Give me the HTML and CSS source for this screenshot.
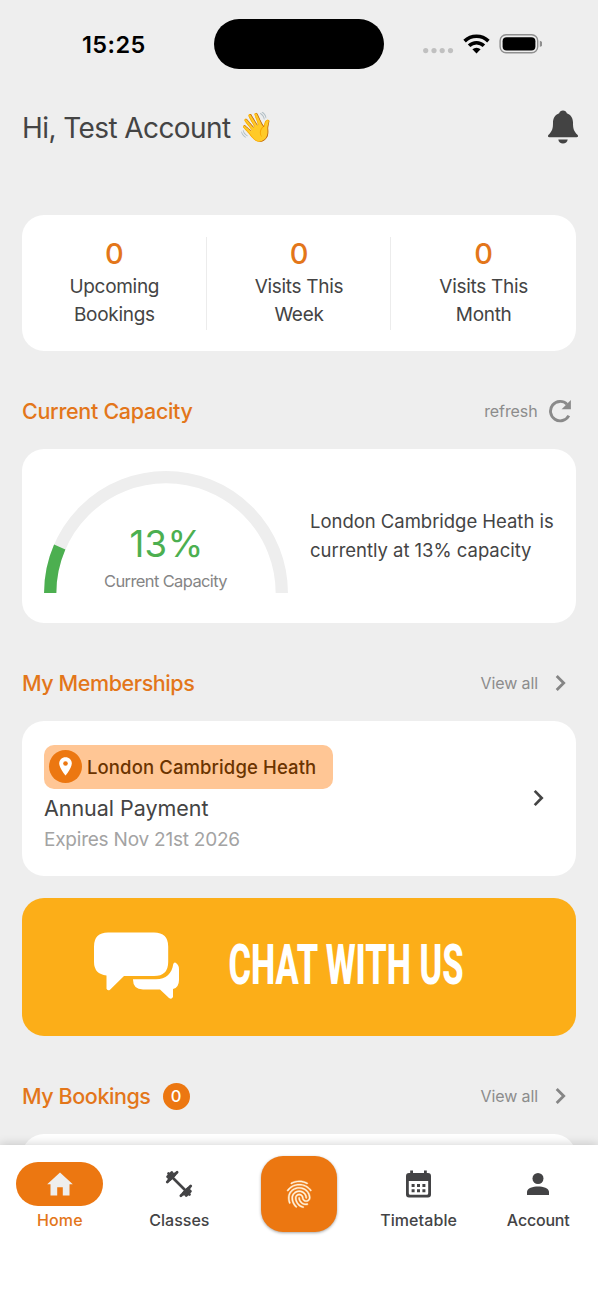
FILE: index.html
```html
<!DOCTYPE html>
<html lang="en">
<head>
<meta charset="utf-8">
<title>Home</title>
<link rel="stylesheet" href="styles.css">
</head>
<body>
<div class="app">
  <main class="screen">
    <div class="status">
      <div class="status-time">15:25</div>
      <div class="island"></div>
      <svg class="status-icons" viewBox="0 0 120 22" width="120" height="22">
        <g fill="#c0c0c0"><circle cx="3.7" cy="17.6" r="2.6"/><circle cx="12" cy="17.6" r="2.6"/><circle cx="20.2" cy="17.6" r="2.6"/><circle cx="28.5" cy="17.6" r="2.6"/></g>
        <g fill="none" stroke="#000" stroke-width="3.6">
          <path d="M42.6 8.1a17.2 17.2 0 0 1 23.8 0"/>
          <path d="M47.1 12.8a10.6 10.6 0 0 1 14.800 0"/>
        </g>
        <path d="M50.4 16.3a6 6 0 0 1 8.2 0l-4.1 4.2z"/>
        <rect x="78.1" y="1.8" width="37.6" height="18" rx="6" fill="none" stroke="#8f8f8f" stroke-width="1.4"/>
        <rect x="80.6" y="4.2" width="32.8" height="13.2" rx="4"/>
        <path d="M117.8 7.800q3 .8 3 3t-3 3z" fill="#8f8f8f"/>
      </svg>
    </div>

    <header class="greeting">
      <h1>Hi, Test Account</h1><span class="wave">👋</span>
      <svg class="bell" viewBox="0 0 30 34" width="30" height="34" fill="#434343">
        <path d="M15 .4c2.1 0 3.2 1 3.8 2.8 4.3 1.5 6.2 5.2 6.2 9.6 0 5.5.6 8.3 4.4 12 1.2 1.3.6 2.4-.9 2.4H1.5C0 27.200-.6 26.100.6 24.800 4.400 21.100 5 18.300 5 12.800 5 8.400 6.900 4.700 11.200 3.200 11.800 1.400 12.900.4 15 .4zM10.300 29.500h9.400c-.3 2.500-2.300 4.100-4.700 4.100s-4.400-1.600-4.700-4.100z"/>
      </svg>
    </header>

    <section class="card stats">
      <div class="stat"><b>0</b><span>Upcoming<br>Bookings</span></div>
      <div class="stat"><b>0</b><span>Visits This<br>Week</span></div>
      <div class="stat"><b>0</b><span>Visits This<br>Month</span></div>
    </section>

    <div class="section-head">
      <h2 class="h-capacity">Current Capacity</h2>
      <span class="link">refresh</span>
      <svg class="refresh" viewBox="0 0 24 24" width="24" height="24">
        <path d="M20.800 16.600A9.700 9.700 0 1 1 19 5.200" fill="none" stroke="#8a8a8a" stroke-width="2.900"/>
        <path d="M22.900 1v9.300h-9.300z" fill="#8a8a8a"/>
      </svg>
    </div>
    <section class="card capacity">
      <div class="gauge">
        <svg viewBox="0 0 244 122" width="244" height="122" fill="none" stroke-width="12.300">
          <path d="M6.200 122a115.800 115.800 0 0 1 231.600 0" stroke="#eee"/>
          <path d="M6.200 122a115.800 115.800 0 0 1 9.520-46" stroke="#4caf50"/>
        </svg>
        <div class="gauge-text"><strong>13%</strong><small>Current Capacity</small></div>
      </div>
      <p>London Cambridge Heath is<br>currently at 13% capacity</p>
    </section>

    <div class="section-head">
      <h2 class="h-members">My Memberships</h2>
      <span class="link">View all</span>
      <svg class="chev" viewBox="0 0 11 18" width="11" height="18"><path d="M1.700 1.900 8.700 9l-7 7.100" fill="none" stroke="#858585" stroke-width="2.800"/></svg>
    </div>
    <section class="card member">
      <div class="member-info">
        <div class="chip">
          <span class="pin"><svg viewBox="0 0 13 19" width="13" height="19"><path d="M6.500.3C2.900.3.200 3 .200 6.500c0 4.700 6.300 12 6.300 12s6.300-7.300 6.300-12C12.800 3 10.100.3 6.500.3z" fill="#fff"/><circle cx="6.500" cy="6.500" r="2.300" fill="#ec7711"/></svg></span>
          <span class="chip-text">London Cambridge Heath</span>
        </div>
        <div class="plan">Annual Payment</div>
        <div class="expires">Expires Nov 21st 2026</div>
      </div>
      <svg class="chev-dark" viewBox="0 0 11 18" width="11" height="18"><path d="M1.700 1.900 8.700 9l-7 7.100" fill="none" stroke="#444" stroke-width="2.700"/></svg>
    </section>

    <section class="banner">
      <svg viewBox="0 0 554 138" width="554" height="138" fill="#fff">
        <path d="M86 34.500h46q14.200 0 14.200 14v15.500q0 14-14.200 14H102L88 91.700q-2 1.500-3.500-1V77.500Q72 76 72 64V48.500q0-14 14-14z"/>
        <path d="M111 81.300h23c10 0 16-6 17.200-15q.600-2.300 2.500-1.500 3.300 2.200 3.300 6.200v11q0 7.500-6 9v8q-1.500 3-4 1l-9-8.600h-17q-10 0-10-9.600z"/>
        <text class="banner-text" transform="translate(206.500 86.300) scale(.6 1)" textLength="391.700" lengthAdjust="spacingAndGlyphs">CHAT WITH US</text>
      </svg>
    </section>

    <div class="section-head">
      <h2 class="h-bookings">My Bookings</h2><span class="badge">0</span>
      <span class="link">View all</span>
      <svg class="chev" viewBox="0 0 11 18" width="11" height="18"><path d="M1.700 1.900 8.700 9l-7 7.100" fill="none" stroke="#858585" stroke-width="2.800"/></svg>
    </div>
    <section class="card next"></section>
  </main>

  <nav class="tabs">
    <a class="tab active">
      <span class="tab-icon"><svg viewBox="0 0 26 24" width="26" height="24" fill="#eee"><path d="M13 .500 25.800 12.300h-3.300V23.500H15.800V15.200h-5.600v8.300H3.500V12.300H.200z"/></svg></span>
      <span class="t-home">Home</span>
    </a>
    <a class="tab">
      <span class="tab-icon"><svg viewBox="0 0 28 28" width="28" height="28" fill="none" stroke="#434345" stroke-linecap="round">
        <path d="M7 7l14 14" stroke-width="2.700"/>
        <path d="M2.300 12.100 12.100 2.300M15.900 25.700 25.700 15.900" stroke-width="2.800"/>
        <path d="M2.600 6.800 6.800 2.600M21.200 25.400l4.200-4.200" stroke-width="2.800"/>
        <path d="M3.500 3.500 7 7M21 21l3.500 3.500" stroke-width="2.700"/>
        <path d="M4.500 9 9 4.500M19 23.500l4.500-4.500" stroke-width="4"/>
      </svg></span>
      <span class="t-classes">Classes</span>
    </a>
    <a class="tab scan">
      <span class="scan-btn"><svg viewBox="0 0 24 24" width="32.500" height="32.500" fill="#fff3dc" stroke="#fff3dc" stroke-width=".3"><path d="M17.810 4.470c-.08 0-.16-.02-.23-.06C15.660 3.420 14 3 12.010 3c-1.980 0-3.860.47-5.570 1.410-.24.13-.54.04-.68-.2-.13-.24-.04-.55.2-.68C7.820 2.520 9.860 2 12.010 2c2.130 0 3.990.47 6.030 1.520.25.13.34.43.21.67-.09.18-.26.28-.44.28zM3.500 9.720c-.1 0-.2-.03-.29-.09-.23-.16-.28-.47-.12-.7.99-1.400 2.250-2.500 3.750-3.270C9.980 4.040 14 4.030 17.150 5.650c1.500.77 2.760 1.860 3.750 3.250.16.22.11.54-.12.7-.23.16-.54.11-.7-.12-.9-1.260-2.040-2.250-3.390-2.940-2.870-1.470-6.540-1.470-9.400.01-1.360.7-2.500 1.700-3.400 2.960-.08.14-.23.21-.39.21zm6.250 12.070c-.13 0-.26-.05-.35-.15-.87-.87-1.340-1.430-2.010-2.640-.69-1.230-1.050-2.730-1.050-4.340 0-2.970 2.540-5.390 5.660-5.390s5.660 2.420 5.660 5.390c0 .28-.22.5-.5.5s-.5-.22-.5-.5c0-2.420-2.090-4.390-4.660-4.390-2.570 0-4.660 1.970-4.660 4.390 0 1.440.32 2.770.93 3.850.64 1.150 1.080 1.640 1.850 2.420.19.2.19.51 0 .71-.11.1-.24.15-.37.15zm7.170-1.850c-1.190 0-2.240-.3-3.100-.89-1.490-1.010-2.380-2.650-2.380-4.390 0-.28.22-.5.5-.5s.5.22.5.5c0 1.410.72 2.740 1.940 3.560.71.48 1.540.71 2.540.71.24 0 .64-.03 1.040-.1.27-.05.53.13.58.41.05.27-.13.53-.41.58-.57.11-1.070.12-1.210.12zM14.910 22c-.04 0-.09-.01-.13-.02-1.590-.44-2.630-1.030-3.720-2.100-1.400-1.390-2.170-3.240-2.170-5.220 0-1.620 1.380-2.940 3.080-2.940 1.700 0 3.080 1.320 3.080 2.940 0 1.070.93 1.940 2.080 1.940s2.080-.87 2.080-1.940c0-3.770-3.250-6.830-7.250-6.830-2.840 0-5.440 1.580-6.610 4.030-.39.81-.59 1.760-.59 2.800 0 .78.07 2.010.67 3.610.1.26-.03.55-.29.64-.26.1-.55-.04-.64-.29-.49-1.310-.73-2.610-.73-3.960 0-1.200.23-2.290.68-3.240 1.330-2.790 4.280-4.600 7.510-4.600 4.550 0 8.250 3.510 8.250 7.830 0 1.620-1.380 2.940-3.080 2.940s-3.080-1.320-3.080-2.940c0-1.070-.93-1.940-2.080-1.940s-2.080.87-2.080 1.940c0 1.710.66 3.310 1.870 4.510.95.94 1.860 1.460 3.270 1.850.27.07.42.35.35.61-.05.23-.26.38-.47.38z"/></svg></span>
    </a>
    <a class="tab">
      <span class="tab-icon"><svg viewBox="0 0 25 28" width="25" height="28"><path d="M3 3h1.200V.4H7V3h11V.4h2.800V3H22q3 0 3 3v18.500q0 3-3 3H3q-3 0-3-3V6q0-3 3-3zm-.2 8v12.200q0 1.500 1.500 1.500h16.400q1.500 0 1.500-1.500V11z" fill="#434345" fill-rule="evenodd"/><path d="M5.600 14h3v3h-3zm5.400 0h3v3h-3zm5.400 0h3v3h-3zM5.600 19.300h3v3h-3zm5.400 0h3v3h-3zm5.400 0h3v3h-3z" fill="#434345"/></svg></span>
      <span class="t-timetable">Timetable</span>
    </a>
    <a class="tab">
      <span class="tab-icon"><svg viewBox="0 0 22 22" width="22" height="22" fill="#434345"><circle cx="11" cy="5.500" r="5.500"/><path d="M0 22v-3c0-3.600 6-5.400 11-5.400s11 1.800 11 5.400v3z"/></svg></span>
      <span class="t-account">Account</span>
    </a>
  </nav>
</div>
</body>
</html>
```
FILE: styles.css
```css
* { box-sizing: border-box; }
body {
  margin: 0;
  background: #eee;
  color: #444;
  font-family: Inter, "Liberation Sans", sans-serif;
}
h1, h2, p { margin: 0; }
svg { display: block; flex: none; }

.app {
  display: flex;
  flex-direction: column;
  height: 1300px;
  overflow: hidden;
}
.screen {
  height: 1145px;
  padding: 0 22px;
  overflow: hidden;
  flex: none;
}

.status {
  height: 89px;
  display: flex;
  align-items: center;
  padding-left: 60px;
}
.status-time {
  width: 131.500px;
  font-size: 23.500px;
  font-weight: 600;
  letter-spacing: .4px;
  color: #000;
}
.island {
  width: 170.500px;
  height: 50px;
  margin-bottom: 1px;
  border-radius: 25px;
  background: #000;
}
.status-icons { margin-left: 38px; margin-bottom: 2px; }

.greeting {
  height: 76px;
  display: flex;
  align-items: center;
}
.greeting h1 {
  font-size: 28px;
  font-weight: 400;
  letter-spacing: -.59px;
  white-space: nowrap;
  margin-top: 1px;
}
.wave {
  font: 29px/34px "Noto Color Emoji", sans-serif;
  margin-left: 8px;
}
.bell { margin-left: auto; margin-right: -1.500px; }

.card {
  background: #fff;
  border-radius: 22px;
}
.stats {
  margin-top: 50px;
  height: 136px;
  padding: 21.500px 0;
  display: grid;
  grid-template-columns: repeat(3, 1fr);
}
.stat {
  text-align: center;
  height: 93px;
}
.stat + .stat { box-shadow: -1px 0 #ececec; }
.stat b {
  display: block;
  font-size: 29px;
  line-height: 33px;
  font-weight: 500;
  color: #e3761a;
}
.stat span {
  display: block;
  font-size: 19px;
  line-height: 28.500px;
  letter-spacing: -.29px;
  margin-top: 3px;
}

.section-head {
  height: 98px;
  padding-top: 22px;
  display: flex;
  align-items: center;
}
.section-head h2 {
  font-size: 21.500px;
  font-weight: 500;
  color: #e3761a;
  white-space: nowrap;
}
.h-capacity { letter-spacing: -.3px; }
.h-members { letter-spacing: -.42px; }
.h-bookings { letter-spacing: -.43px; }
.link {
  margin-left: auto;
  font-size: 16px;
  letter-spacing: -.1px;
  color: #8c8c8c;
}
.refresh { margin: 0 4px 0 10.500px; }
.chev { margin: 0 10.500px 0 16.500px; }

.capacity {
  height: 174px;
  padding: 21.500px;
  display: flex;
}
.gauge {
  display: grid;
  width: 244px;
  height: 122px;
  justify-items: center;
}
.gauge > * { grid-area: 1 / 1; }
.gauge-text {
  padding-top: 51.500px;
  text-align: center;
}
.gauge-text strong {
  display: block;
  font-size: 36.500px;
  font-weight: 400;
  line-height: 44px;
  letter-spacing: .3px;
  padding-left: 2px;
  color: #4caf50;
}
.gauge-text small {
  display: block;
  font-size: 16.500px;
  line-height: 20px;
  margin-top: 4.500px;
  letter-spacing: -.62px;
  color: #858585;
}
.capacity p {
  margin: 36.500px 0 0 22.500px;
  font-size: 18.500px;
  line-height: 28.500px;
  letter-spacing: -.03px;
  white-space: nowrap;
}

.member {
  height: 155px;
  padding: 24px 32.500px 0 22px;
  display: flex;
}
.chip {
  width: 289px;
  height: 43.500px;
  padding-left: 5px;
  display: flex;
  align-items: center;
  background: #ffc695;
  border-radius: 10px;
}
.pin {
  width: 33px;
  height: 33px;
  border-radius: 50%;
  background: #ec7711;
  display: grid;
  place-items: center;
}
.chip-text {
  margin-left: 5px;
  font-size: 18.500px;
  font-weight: 500;
  letter-spacing: .11px;
  color: #6b3400;
  white-space: nowrap;
}
.plan {
  font-size: 21.500px;
  line-height: 32px;
  margin-top: 3.500px;
  letter-spacing: -.04px;
}
.expires {
  font-size: 19px;
  line-height: 28px;
  margin-top: 1.500px;
  letter-spacing: -.22px;
  color: #a3a3a3;
}
.chev-dark { margin: 44px 0 0 auto; }

.banner {
  margin-top: 21.500px;
  height: 138.500px;
  border-radius: 22px;
  overflow: hidden;
  background: #fcae18;
}
.banner-text {
  font-family: Roboto, sans-serif;
  font-weight: 800;
  font-size: 55px;
}

.badge {
  width: 27px;
  height: 27px;
  margin-left: 12px;
  border-radius: 50%;
  background: #ec7711;
  color: #fff;
  font-size: 16.500px;
  font-weight: 500;
  line-height: 27px;
  text-align: center;
}
.next { height: 150px; }

.tabs {
  position: relative;
  height: 155px;
  flex: none;
  display: grid;
  grid-template-columns: repeat(5, 1fr);
  background: #fff;
  box-shadow: 0 -1px 9px rgba(0, 0, 0, .17);
}
.tab {
  display: flex;
  flex-direction: column;
  align-items: center;
  padding-top: 17px;
  font-size: 16px;
  font-weight: 500;
  line-height: 20px;
  color: #434345;
}
.tab-icon {
  width: 87px;
  height: 44px;
  margin-bottom: 4px;
  border-radius: 22px;
  display: grid;
  place-items: center;
}
.active { color: #e3761a; }
.active .tab-icon { background: #ec7711; }
.t-home { letter-spacing: .15px; }
.t-classes { letter-spacing: 0; }
.t-timetable { letter-spacing: .1px; }
.t-account { letter-spacing: -.2px; }
.scan { padding-top: 11px; }
.scan-btn {
  width: 76px;
  height: 76px;
  border-radius: 22px;
  display: grid;
  place-items: center;
  background: #ec7711;
  box-shadow: 0 1px 3px rgba(0, 0, 0, .35);
}
```
